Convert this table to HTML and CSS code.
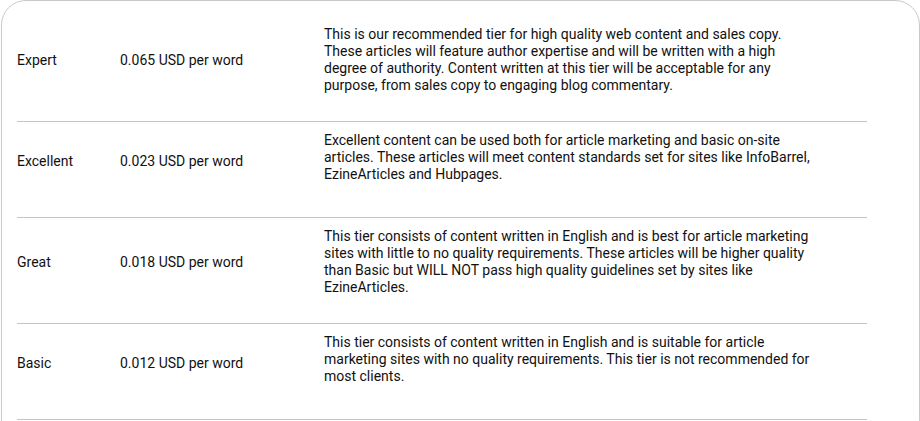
FILE: index.html
```html
<!DOCTYPE html>
<html>
<head>
<meta charset="utf-8">
<link rel="stylesheet" href="styles.css">
</head>
<body>
<div class="card">
  <div class="row">
    <div class="tier">Expert</div>
    <div class="price">0.065 USD per word</div>
    <div class="desc">This is our recommended tier for high quality web content and sales copy. These articles will feature author expertise and will be written with a high degree of authority. Content written at this tier will be acceptable for any purpose, from sales copy to engaging blog commentary.</div>
  </div>
  <div class="row">
    <div class="tier">Excellent</div>
    <div class="price">0.023 USD per word</div>
    <div class="desc">Excellent content can be used both for article marketing and basic on-site articles. These articles will meet content standards set for sites like InfoBarrel, EzineArticles and Hubpages.</div>
  </div>
  <div class="row">
    <div class="tier">Great</div>
    <div class="price">0.018 USD per word</div>
    <div class="desc">This tier consists of content written in English and is best for article marketing sites with little to no quality requirements. These articles will be higher quality than Basic but WILL NOT pass high quality guidelines set by sites like EzineArticles.</div>
  </div>
  <div class="row">
    <div class="tier">Basic</div>
    <div class="price">0.012 USD per word</div>
    <div class="desc">This tier consists of content written in English and is suitable for article marketing sites with no quality requirements. This tier is not recommended for most clients.</div>
  </div>
</div>
</body>
</html>
```
FILE: styles.css
```css
html, body {
  margin: 0;
  padding: 0;
  background: #fff;
  overflow: hidden;
}
body {
  font-family: Roboto, "Liberation Sans", sans-serif;
  font-size: 14px;
  line-height: 17px;
  color: #111;
}
.card {
  box-sizing: border-box;
  margin-left: 1px;
  width: 919px;
  height: 445px;
  border: 1px solid #c9c9c9;
  border-radius: 25px;
  padding: 15px 52px 0 15px;
}
.row {
  display: grid;
  grid-template-columns: 103px 204px 494px;
  align-items: center;
  padding: 10px 0 27px;
  border-bottom: 1px solid #c4c4c4;
}
.desc {
  min-height: 58px;
}
```
